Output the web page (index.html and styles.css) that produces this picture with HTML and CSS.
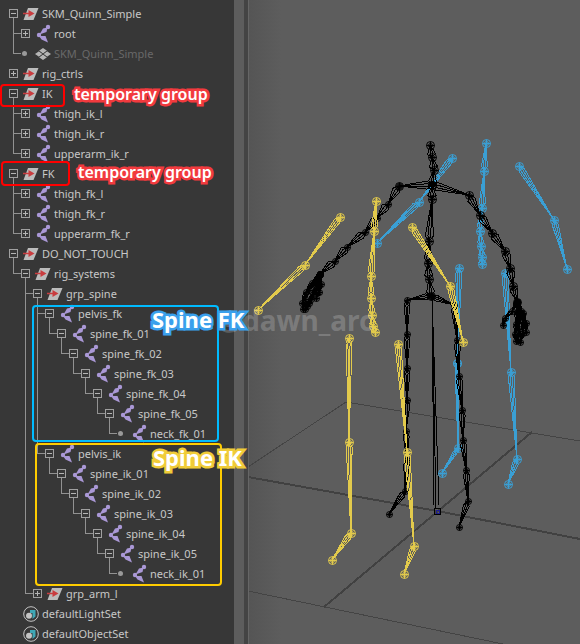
FILE: index.html
```html
<!DOCTYPE html>
<html lang="en">
<head>
<meta charset="utf-8">
<title>Outliner</title>
<link rel="stylesheet" href="styles.css">
</head>
<body>
<svg class="defs" aria-hidden="true">
  <symbol id="group" viewBox="0 0 16 20">
    <path d="M5 4H15.500L10.500 16H.5z" fill="#bcbcbc"/>
    <path d="M0 9.500H8" stroke="#c93c3f" stroke-width="1.500"/>
    <path d="M5.500 6L11.500 9.500L5.500 13z" fill="#c93c3f"/>
  </symbol>
  <symbol id="joint" viewBox="0 0 16 20">
    <g fill="#aa98d6"><circle cx="13" cy="3" r="2.200"/><circle cx="4" cy="11" r="2.200"/>
    <path d="M12.500 3.500L11.500 8L4.500 10.500L8 4.500z"/>
    <path d="M4 12L10.500 12L13 18.500L6.500 15.500z"/></g>
  </symbol>
  <symbol id="mesh" viewBox="0 0 16 20">
    <path d="M8 4l4 2.700-4 2.700-4-2.700zM4 7.300l4 2.700-4 2.700L0 10zM12 7.300l4 2.700-4 2.700L8 10zM8 10.600l4 2.700L8 16l-4-2.700z" fill="#b5b5b5"/>
    <path d="M4 7L12 13M12 7L4 13" stroke="#373737" stroke-width=".8"/>
  </symbol>
  <symbol id="set" viewBox="0 0 16 20">
    <circle cx="8" cy="10" r="7.300" fill="none" stroke="#c4c4c4"/>
    <path d="M7 6h5.500v6.500L9.500 15V9H7z" fill="#3fa7b5"/>
    <circle cx="6" cy="11.700" r="3" fill="#c4c4c4"/>
  </symbol>
</svg>
<main class="app">
  <nav class="outliner" aria-label="Outliner">
    <ul class="tree">
      <li><div class="row"><button class="toggle open" aria-label="Collapse"></button><svg class="icon"><use href="#group"/></svg><span>SKM_Quinn_Simple</span></div>
        <ul>
          <li><div class="row"><button class="toggle" aria-label="Expand"></button><svg class="icon"><use href="#joint"/></svg><span>root</span></div></li>
          <li><div class="row"><i class="leaf"></i><svg class="icon"><use href="#mesh"/></svg><span class="dim">SKM_Quinn_Simple</span></div></li>
        </ul></li>
      <li><div class="row"><button class="toggle" aria-label="Expand"></button><svg class="icon"><use href="#group"/></svg><span>rig_ctrls</span></div></li>
      <li><div class="row"><button class="toggle open" aria-label="Collapse"></button><svg class="icon"><use href="#group"/></svg><span>IK</span></div>
        <ul>
          <li><div class="row"><button class="toggle" aria-label="Expand"></button><svg class="icon"><use href="#joint"/></svg><span>thigh_ik_l</span></div></li>
          <li><div class="row"><button class="toggle" aria-label="Expand"></button><svg class="icon"><use href="#joint"/></svg><span>thigh_ik_r</span></div></li>
          <li><div class="row"><button class="toggle" aria-label="Expand"></button><svg class="icon"><use href="#joint"/></svg><span>upperarm_ik_r</span></div></li>
        </ul></li>
      <li><div class="row"><button class="toggle open" aria-label="Collapse"></button><svg class="icon"><use href="#group"/></svg><span>FK</span></div>
        <ul>
          <li><div class="row"><button class="toggle" aria-label="Expand"></button><svg class="icon"><use href="#joint"/></svg><span>thigh_fk_l</span></div></li>
          <li><div class="row"><button class="toggle" aria-label="Expand"></button><svg class="icon"><use href="#joint"/></svg><span>thigh_fk_r</span></div></li>
          <li><div class="row"><button class="toggle" aria-label="Expand"></button><svg class="icon"><use href="#joint"/></svg><span>upperarm_fk_r</span></div></li>
        </ul></li>
      <li><div class="row"><button class="toggle open" aria-label="Collapse"></button><svg class="icon"><use href="#group"/></svg><span>DO_NOT_TOUCH</span></div>
        <ul><li><div class="row"><button class="toggle open" aria-label="Collapse"></button><svg class="icon"><use href="#group"/></svg><span>rig_systems</span></div>
          <ul>
            <li><div class="row"><button class="toggle open" aria-label="Collapse"></button><svg class="icon"><use href="#group"/></svg><span>grp_spine</span></div>
              <ul>
                <li><div class="row"><button class="toggle open" aria-label="Collapse"></button><svg class="icon"><use href="#joint"/></svg><span>pelvis_fk</span></div>
                  <ul><li><div class="row"><button class="toggle open" aria-label="Collapse"></button><svg class="icon"><use href="#joint"/></svg><span>spine_fk_01</span></div>
                  <ul><li><div class="row"><button class="toggle open" aria-label="Collapse"></button><svg class="icon"><use href="#joint"/></svg><span>spine_fk_02</span></div>
                  <ul><li><div class="row"><button class="toggle open" aria-label="Collapse"></button><svg class="icon"><use href="#joint"/></svg><span>spine_fk_03</span></div>
                  <ul><li><div class="row"><button class="toggle open" aria-label="Collapse"></button><svg class="icon"><use href="#joint"/></svg><span>spine_fk_04</span></div>
                  <ul><li><div class="row"><button class="toggle open" aria-label="Collapse"></button><svg class="icon"><use href="#joint"/></svg><span>spine_fk_05</span></div>
                  <ul><li><div class="row"><i class="leaf"></i><svg class="icon"><use href="#joint"/></svg><span>neck_fk_01</span></div></li></ul>
                  </li></ul></li></ul></li></ul></li></ul></li></ul></li>
                <li><div class="row"><button class="toggle open" aria-label="Collapse"></button><svg class="icon"><use href="#joint"/></svg><span>pelvis_ik</span></div>
                  <ul><li><div class="row"><button class="toggle open" aria-label="Collapse"></button><svg class="icon"><use href="#joint"/></svg><span>spine_ik_01</span></div>
                  <ul><li><div class="row"><button class="toggle open" aria-label="Collapse"></button><svg class="icon"><use href="#joint"/></svg><span>spine_ik_02</span></div>
                  <ul><li><div class="row"><button class="toggle open" aria-label="Collapse"></button><svg class="icon"><use href="#joint"/></svg><span>spine_ik_03</span></div>
                  <ul><li><div class="row"><button class="toggle open" aria-label="Collapse"></button><svg class="icon"><use href="#joint"/></svg><span>spine_ik_04</span></div>
                  <ul><li><div class="row"><button class="toggle open" aria-label="Collapse"></button><svg class="icon"><use href="#joint"/></svg><span>spine_ik_05</span></div>
                  <ul><li><div class="row"><i class="leaf"></i><svg class="icon"><use href="#joint"/></svg><span>neck_ik_01</span></div></li></ul>
                  </li></ul></li></ul></li></ul></li></ul></li></ul></li>
              </ul></li>
            <li><div class="row"><button class="toggle" aria-label="Expand"></button><svg class="icon"><use href="#group"/></svg><span>grp_arm_l</span></div></li>
          </ul></li></ul></li>
      <li><div class="row"><i class="blank"></i><svg class="icon"><use href="#set"/></svg><span>defaultLightSet</span></div></li>
      <li><div class="row"><i class="blank"></i><svg class="icon"><use href="#set"/></svg><span>defaultObjectSet</span></div></li>
    </ul>
  </nav>
  <div class="scrollbar"></div>
  <div class="splitter"></div>
  <section class="viewport" aria-label="Viewport">
    <svg id="scene" viewBox="249 0 331 644" preserveAspectRatio="xMinYMin slice"></svg>
  </section>
  <div class="watermark">@dawn_arc</div>
  <div class="frame frame-ik"></div>
  <div class="frame frame-fk"></div>
  <div class="frame frame-spine-fk"></div>
  <div class="frame frame-spine-ik"></div>
  <div class="note note-ik">temporary group</div>
  <div class="note note-fk">temporary group</div>
  <div class="note title title-fk">Spine FK</div>
  <div class="note title title-ik">Spine IK</div>
</main>
<script src="scene.js"></script>
</body>
</html>
```
FILE: styles.css
```css
* { box-sizing: border-box; }
body {
  margin: 0;
  background: #5d5d5d;
  font-family: "Noto Sans", "Open Sans", sans-serif;
}
.defs { position: absolute; width: 0; height: 0; }
.app { position: relative; display: flex; min-height: 100vh; overflow: hidden; }
.outliner {
  flex: 0 0 234px;
  background: #373737;
  color: #c8c8c8;
  font-size: 11px;
  line-height: 20px;
}
.scrollbar { flex: 0 0 10px; background: #5d5d5d; }
.splitter { flex: 0 0 5px; background: #444; border-right: 1px solid #666; }
.viewport {
  position: relative;
  flex: 1;
  min-width: 0;
  background: linear-gradient(90deg, #555, #5d5d5d 32px);
}
#scene { position: absolute; inset: 0; width: 100%; height: 100%; }

.tree, .tree ul { list-style: none; margin: 0; padding: 0; }
.tree { padding: 4px 0 0 9px; }
.tree ul { margin-left: 12px; }
.tree li { position: relative; }
.tree ul > li::before {
  content: "";
  position: absolute;
  left: -8px;
  top: 9px;
  width: 8px;
  border-top: 1px solid #929292;
}
.tree ul > li::after {
  content: "";
  position: absolute;
  left: -8px;
  top: -6px;
  bottom: 0;
  border-left: 1px solid #929292;
}
.tree ul > li:last-child::after { bottom: auto; height: 16px; }
.row { display: flex; height: 20px; white-space: nowrap; }
.toggle {
  flex: none;
  width: 9px;
  height: 9px;
  margin: 5px 5px 0 0;
  padding: 0;
  border: 1px solid #a0a0a0;
  background:
    linear-gradient(#b4b4b4, #b4b4b4) center / 5px 1px no-repeat,
    linear-gradient(#b4b4b4, #b4b4b4) center / 1px 5px no-repeat;
}
.toggle.open { background: linear-gradient(#b4b4b4, #b4b4b4) center / 5px 1px no-repeat; }
.leaf {
  flex: none;
  width: 5px;
  height: 5px;
  margin: 7px 8px 0 1px;
  border-radius: 50%;
  background: #999;
}
.blank { flex: none; width: 14px; }
.icon { flex: none; width: 16px; height: 20px; margin-right: 3px; }
.dim { color: #696969; }

.frame { position: absolute; border: 2px solid; border-radius: 4px; }
.frame-ik { left: 0; top: 84px; width: 65px; height: 23px; border-color: #f00; }
.frame-fk { left: 1px; top: 161px; width: 69px; height: 25px; border-color: #f00; }
.frame-spine-fk { left: 32px; top: 305px; width: 187px; height: 137px; border-color: #0bf; }
.frame-spine-ik { left: 35px; top: 443px; width: 187px; height: 143px; border-color: #fc0; }

.note {
  position: absolute;
  color: #fff;
  font-size: 16px;
  font-weight: 600;
  line-height: 24px;
  white-space: nowrap;
  paint-order: stroke fill;
  -webkit-text-stroke: 5px #f23a3e;
}
.note-ik { left: 74px; top: 82px; }
.note-fk { left: 78px; top: 160px; }
.title { font-size: 22px; font-weight: 700; line-height: 30px; -webkit-text-stroke-color: #3aa0ec; }
.title-fk { left: 152px; top: 304px; }
.title-ik { left: 153px; top: 442px; -webkit-text-stroke-color: #f0cc38; }
.watermark {
  position: absolute;
  left: 217px;
  top: 302px;
  color: rgba(255, 255, 255, 0.2);
  font-size: 28px;
  font-weight: 700;
  line-height: 36px;
}
```
FILE: scene.js
```js
const scene = document.getElementById("scene");
const NS = "http://www.w3.org/2000/svg";

function path(d, color, width = 1, rendering = "crispEdges") {
  const el = document.createElementNS(NS, "path");
  el.setAttribute("d", d);
  el.setAttribute("stroke", color);
  el.setAttribute("stroke-width", width);
  el.setAttribute("fill", "none");
  el.setAttribute("shape-rendering", rendering);
  scene.appendChild(el);
}

// Floor grid
path("M248 467L346 402L580 441M248 591L580 660", "#444");
path("M248 477L437 511L580 539M532 432L324 607", "#414141", 2);

// A joint: ring with a smaller ring and a cross inside
function joint([x, y], r) {
  const q = r / 2;
  return `M${x - r} ${y}a${r} ${r} 0 1 0 ${2 * r} 0a${r} ${r} 0 1 0 ${-2 * r} 0` +
    `M${x - q} ${y}a${q} ${q} 0 1 0 ${2 * q} 0a${q} ${q} 0 1 0 ${-2 * q} 0` +
    `M${x - r} ${y}h${2 * r}M${x} ${y - r}v${2 * r}`;
}

// A bone: wire pyramid, wide near its parent and pointed at its child
function bone([ax, ay], [bx, by], w) {
  const len = Math.hypot(bx - ax, by - ay) || 1;
  const ux = (bx - ax) / len, uy = (by - ay) / len;
  const k = Math.min(5, len / 4);
  return [-1, -0.35, 0.35, 1].map((s) => {
    const px = ax + ux * k - uy * w * s, py = ay + uy * k + ux * w * s;
    return `M${ax} ${ay}L${px} ${py}L${bx} ${by}`;
  }).join("");
}

function chain(points, color, w = 3, r = 4) {
  let d = "";
  for (let i = 1; i < points.length; i++) d += bone(points[i - 1], points[i], w);
  path(d, color);
  path(points.map((p) => joint([p[0] + 0.5, p[1] + 0.5], r)).join(""), color, 1, "geometricPrecision");
}

const BLUE = "#3a9fd4", YELLOW = "#e2ca4c", BLACK = "#000";

chain([[452, 158], [419, 202], [377, 243]], BLUE);
chain([[482, 264], [482, 257], [481, 246], [480, 231], [482, 208], [484, 171], [486, 143]], BLUE);
chain([[519, 166], [554, 220], [567, 269]], BLUE);
chain([[459, 268], [457, 363]], BLUE, 3);
chain([[457, 363], [458, 448], [442, 473]], BLUE, 2);
chain([[505, 273], [511, 372], [517, 459], [508, 484]], BLUE, 3);

chain([[431, 296], [429, 279], [428, 263], [429, 241], [432, 199], [432, 185], [434, 170], [432, 157], [430, 145]], BLACK, 4);
chain([[432, 185], [399, 186]], BLACK, 4);
chain([[399, 186], [388, 204], [377, 218], [365, 232], [347, 247], [335, 261], [320, 274]], BLACK, 4, 3);
chain([[432, 185], [469, 195], [480, 215], [492, 233], [505, 251], [510, 268], [513, 286], [517, 302]], BLACK, 4);
chain([[431, 296], [407, 300], [407, 334], [407, 368], [407, 400], [406, 431], [407, 460], [405, 491], [389, 514]], BLACK, 3, 3);
chain([[431, 296], [454, 305], [457, 340], [459, 376], [462, 410], [463, 440], [466, 470], [468, 501], [459, 527]], BLACK, 3, 3);
path("M434 505L432 297L439 505M436 508L432 297M434 508h6v6h-6z", BLACK);
path("M436 510h3v3h-3z", "#1c1c8c");

// Fingers
const leftHand = [
  [[320, 274], [315, 282], [309, 290], [305, 299], [303, 309]],
  [[320, 274], [318, 286], [313, 294], [309, 303], [305, 309]],
  [[320, 274], [312, 283], [306, 292], [302, 303]],
  [[320, 274], [321, 284], [319, 292], [316, 298]],
  [[320, 274], [316, 288], [311, 299], [307, 306]],
];
const rightHand = [
  [[517, 302], [512, 311], [505, 318], [503, 325]],
  [[517, 302], [517, 312], [516, 324], [515, 334], [516, 341]],
  [[517, 302], [521, 311], [523, 322], [523, 333], [520, 342]],
  [[517, 302], [523, 313], [526, 323], [526, 332]],
  [[517, 302], [519, 316], [519, 329], [518, 340]],
];
for (const finger of [...leftHand, ...rightHand]) chain(finger, BLACK, 2, 3);

chain([[340, 217], [305, 265], [258, 310]], YELLOW);
chain([[375, 332], [373, 326], [372, 315], [371, 298], [371, 276], [374, 231], [376, 201]], YELLOW);
chain([[412, 227], [450, 286], [463, 342]], YELLOW);
chain([[349, 338], [349, 442], [351, 533], [332, 560]], YELLOW, 3);
chain([[398, 344], [407, 452], [414, 546], [404, 574]], YELLOW, 3);
```
